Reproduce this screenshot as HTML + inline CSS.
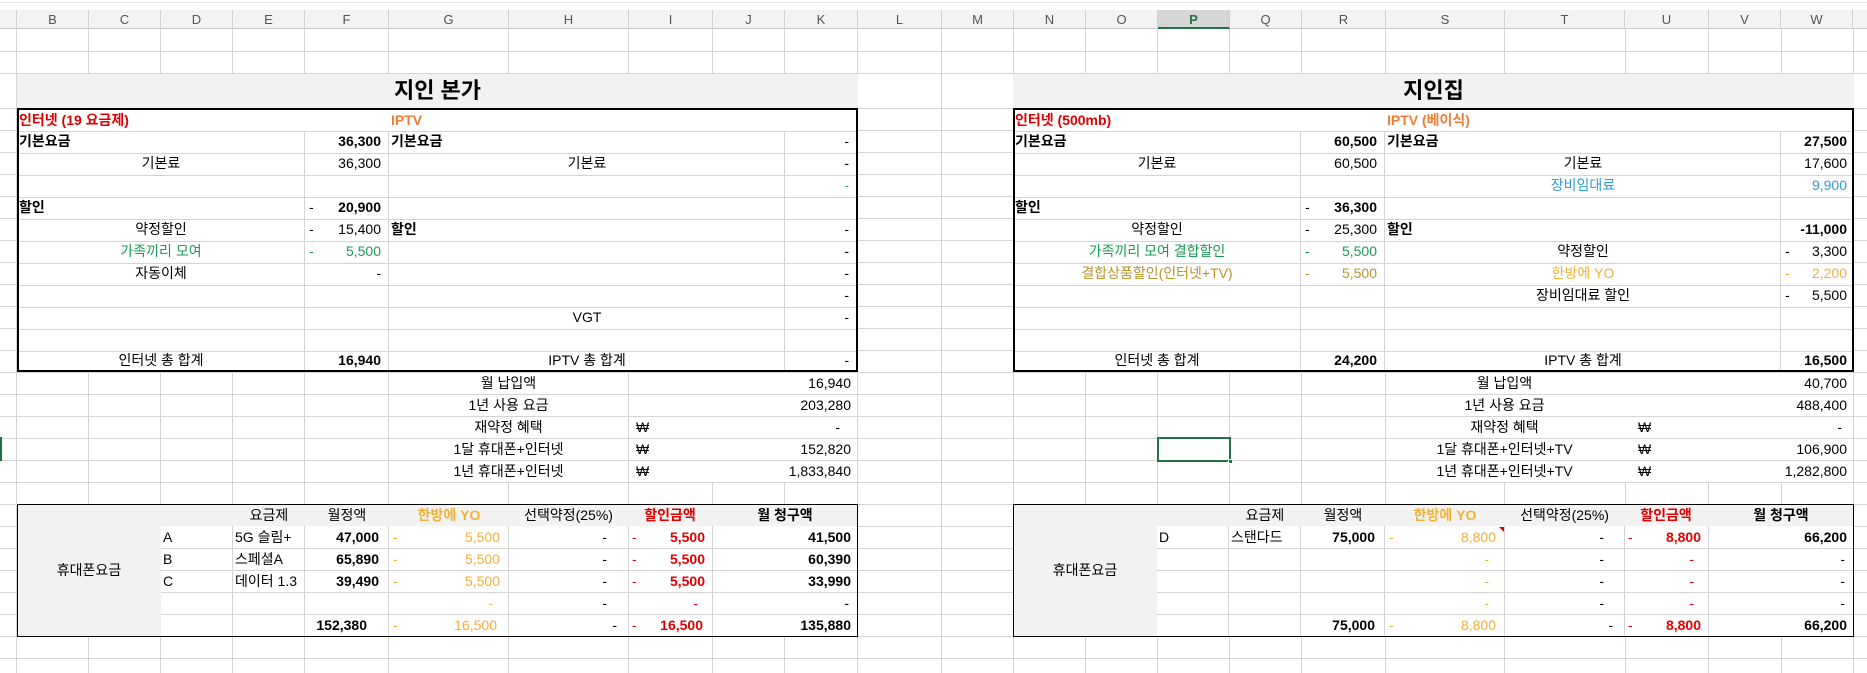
<!DOCTYPE html>
<html><head><meta charset="utf-8">
<style>
*{margin:0;padding:0;box-sizing:border-box}
body{width:1867px;height:673px;overflow:hidden;background:#fff;position:relative;font-family:"Liberation Sans","Noto Sans CJK KR",sans-serif;color:#000}
.a{position:absolute}
.t{position:absolute;height:22px;line-height:22px;font-size:14px;white-space:nowrap}
.b{font-weight:bold}
.c{text-align:center}
.r{text-align:right}
.blk{position:absolute;left:0;top:0;width:0;height:0}
.hl{position:absolute;height:1px;background:#d4d4d4}
.vl{position:absolute;width:1px;background:#d4d4d4}
.red{color:#e00000}.org{color:#ed7d31}.grn{color:#1a9a55}.gold{color:#b8922a}.blu{color:#2e9bd6}.amb{color:#f2b035}
.hdr{position:absolute;top:10px;height:19px;line-height:19px;font-size:13px;color:#555;text-align:center;border-right:1px solid #d0d0d0}
.grid{background:repeating-linear-gradient(to bottom,#fff 0 21px,#d4d4d4 21px 22px)}
.ttl{font-size:22px}
</style></head><body>
<div class="a" style="left:0;top:0;width:1867px;height:3px;background:#fff;border-bottom:1px solid #e6e6e6"></div>
<div class="a" style="left:0;top:10px;width:1867px;height:19px;background:#f3f3f3;border-bottom:1px solid #c8c8c8"></div>
<svg class="a" style="left:0;top:0" width="1867" height="673">
<g stroke="#d4d4d4" stroke-width="1">
<path d="M16.5 29V673M88.5 29V673M160.5 29V673M232.5 29V673M304.5 29V673M388.5 29V673M508.5 29V673M628.5 29V673M712.5 29V673M784.5 29V673M857.5 29V673M941.5 29V673M1013.5 29V673M1085.5 29V673M1157.5 29V673M1229.5 29V673M1301.5 29V673M1385.5 29V673M1504.5 29V673M1625.5 29V673M1708.5 29V673M1781.5 29V673M1853.5 29V673"/>
<path d="M0 51.5H1867M0 73.5H1867M0 108.5H1867M0 130.5H1867M0 152.5H1867M0 174.5H1867M0 196.5H1867M0 218.5H1867M0 240.5H1867M0 262.5H1867M0 284.5H1867M0 306.5H1867M0 328.5H1867M0 350.5H1867M0 372.5H1867M0 394.5H1867M0 416.5H1867M0 438.5H1867M0 460.5H1867M0 482.5H1867M0 504.5H1867M0 526.5H1867M0 548.5H1867M0 570.5H1867M0 592.5H1867M0 614.5H1867M0 636.5H1867M0 658.5H1867"/>
</g>
</svg>
<div class="hdr" style="left:0;width:17px"></div>
<div class="hdr" style="left:17px;width:72px">B</div>
<div class="hdr" style="left:89px;width:72px">C</div>
<div class="hdr" style="left:161px;width:72px">D</div>
<div class="hdr" style="left:233px;width:72px">E</div>
<div class="hdr" style="left:305px;width:84px">F</div>
<div class="hdr" style="left:389px;width:120px">G</div>
<div class="hdr" style="left:509px;width:120px">H</div>
<div class="hdr" style="left:629px;width:84px">I</div>
<div class="hdr" style="left:713px;width:72px">J</div>
<div class="hdr" style="left:785px;width:73px">K</div>
<div class="hdr" style="left:858px;width:84px">L</div>
<div class="hdr" style="left:942px;width:72px">M</div>
<div class="hdr" style="left:1014px;width:72px">N</div>
<div class="hdr" style="left:1086px;width:72px">O</div>
<div class="hdr" style="left:1158px;width:72px;background:#d6d6d6;color:#217346;font-weight:bold;border-bottom:2px solid #217346">P</div>
<div class="hdr" style="left:1230px;width:72px">Q</div>
<div class="hdr" style="left:1302px;width:84px">R</div>
<div class="hdr" style="left:1386px;width:119px">S</div>
<div class="hdr" style="left:1505px;width:120px">T</div>
<div class="hdr" style="left:1625px;width:84px">U</div>
<div class="hdr" style="left:1709px;width:72px">V</div>
<div class="hdr" style="left:1781px;width:72px">W</div>

<div class="blk">
<div class="a b c ttl" style="left:17px;top:74px;width:841px;height:34px;line-height:34px;background:#f2f2f2">지인 본가</div>
<div class="a grid" style="left:17px;top:108px;width:841px;height:264px;border:2px solid #000"></div>
<div class="vl" style="left:304px;top:131px;height:239px"></div>
<div class="vl" style="left:388px;top:131px;height:239px"></div>
<div class="vl" style="left:784px;top:131px;height:239px"></div>
<div class="t b red" style="left:19px;top:109px">인터넷 (19 요금제)</div>
<div class="t b org" style="left:391px;top:109px">IPTV</div>
<div class="t b" style="left:19px;top:130px">기본요금</div>
<div class="t b r" style="left:305px;width:76px;top:130px">36,300</div>
<div class="t b" style="left:391px;top:130px">기본요금</div>
<div class="t r" style="left:785px;width:64px;top:130px">-</div>
<div class="t c" style="left:17px;width:288px;top:152px">기본료</div>
<div class="t r" style="left:305px;width:76px;top:152px">36,300</div>
<div class="t c" style="left:389px;width:396px;top:152px">기본료</div>
<div class="t r" style="left:785px;width:64px;top:152px">-</div>
<div class="t r blu" style="left:785px;width:64px;top:174px">-</div>
<div class="t b" style="left:19px;top:196px">할인</div>
<div class="t" style="left:309px;top:196px">-</div>
<div class="t b r" style="left:305px;width:76px;top:196px">20,900</div>
<div class="t c" style="left:17px;width:288px;top:218px">약정할인</div>
<div class="t" style="left:309px;top:218px">-</div>
<div class="t r" style="left:305px;width:76px;top:218px">15,400</div>
<div class="t b" style="left:391px;top:218px">할인</div>
<div class="t r" style="left:785px;width:64px;top:218px">-</div>
<div class="t c grn" style="left:17px;width:288px;top:240px">가족끼리 모여</div>
<div class="t grn" style="left:309px;top:240px">-</div>
<div class="t r grn" style="left:305px;width:76px;top:240px">5,500</div>
<div class="t r" style="left:785px;width:64px;top:240px">-</div>
<div class="t c" style="left:17px;width:288px;top:262px">자동이체</div>
<div class="t r" style="left:305px;width:76px;top:262px">-</div>
<div class="t r" style="left:785px;width:64px;top:262px">-</div>
<div class="t r" style="left:785px;width:64px;top:284px">-</div>
<div class="t c" style="left:389px;width:396px;top:306px">VGT</div>
<div class="t r" style="left:785px;width:64px;top:306px">-</div>
<div class="t c" style="left:17px;width:288px;top:349px">인터넷 총 합계</div>
<div class="t b r" style="left:305px;width:76px;top:349px">16,940</div>
<div class="t c" style="left:389px;width:396px;top:349px">IPTV 총 합계</div>
<div class="t r" style="left:785px;width:64px;top:349px">-</div>
<div class="a grid" style="left:390px;top:373px;width:238px;height:110px"></div>
<div class="a grid" style="left:629px;top:373px;width:228px;height:110px"></div>
<div class="t c" style="left:389px;width:239px;top:372px">월 납입액</div>
<div class="t r" style="left:628px;width:223px;top:372px">16,940</div>
<div class="t c" style="left:389px;width:239px;top:394px">1년 사용 요금</div>
<div class="t r" style="left:628px;width:223px;top:394px">203,280</div>
<div class="t c" style="left:389px;width:239px;top:416px">재약정 혜택</div>
<div class="t" style="left:636px;top:416px">₩</div>
<div class="t r" style="left:628px;width:212px;top:416px">-</div>
<div class="t c" style="left:389px;width:239px;top:438px">1달 휴대폰+인터넷</div>
<div class="t" style="left:636px;top:438px">₩</div>
<div class="t r" style="left:628px;width:223px;top:438px">152,820</div>
<div class="t c" style="left:389px;width:239px;top:460px">1년 휴대폰+인터넷</div>
<div class="t" style="left:636px;top:460px">₩</div>
<div class="t r" style="left:628px;width:223px;top:460px">1,833,840</div>
<div class="a" style="left:17px;top:504px;width:841px;height:133px;border:1px solid #000;background:#fff"></div>
<div class="a" style="left:18px;top:505px;width:143px;height:131px;background:#f2f2f2"></div>
<div class="a" style="left:161px;top:505px;width:696px;height:21px;background:#f2f2f2"></div>
<div class="hl" style="left:161px;top:548px;width:696px"></div>
<div class="hl" style="left:161px;top:570px;width:696px"></div>
<div class="hl" style="left:161px;top:592px;width:696px"></div>
<div class="hl" style="left:161px;top:614px;width:696px"></div>
<div class="vl" style="left:232px;top:526px;height:110px"></div>
<div class="vl" style="left:304px;top:526px;height:110px"></div>
<div class="vl" style="left:388px;top:526px;height:110px"></div>
<div class="vl" style="left:508px;top:526px;height:110px"></div>
<div class="vl" style="left:628px;top:526px;height:110px"></div>
<div class="vl" style="left:712px;top:526px;height:110px"></div>
<div class="t c" style="left:17px;width:144px;top:559px">휴대폰요금</div>
<div class="t c" style="left:233px;width:72px;top:504px">요금제</div>
<div class="t c" style="left:305px;width:84px;top:504px">월정액</div>
<div class="t c b amb" style="left:389px;width:120px;top:504px">한방에 YO</div>
<div class="t c" style="left:509px;width:119px;top:504px">선택약정(25%)</div>
<div class="t c b red" style="left:628px;width:84px;top:504px">할인금액</div>
<div class="t c b" style="left:712px;width:146px;top:504px">월 청구액</div>
<div class="t" style="left:163px;top:526px">A</div>
<div class="t" style="left:235px;top:526px">5G 슬림+</div>
<div class="t b r" style="left:305px;width:74px;top:526px">47,000</div>
<div class="t amb" style="left:393px;top:526px">-</div>
<div class="t r amb" style="left:389px;width:111px;top:526px">5,500</div>
<div class="t r" style="left:509px;width:98px;top:526px">-</div>
<div class="t red" style="left:632px;top:526px">-</div>
<div class="t b r red" style="left:628px;width:77px;top:526px">5,500</div>
<div class="t b r" style="left:712px;width:139px;top:526px">41,500</div>
<div class="t" style="left:163px;top:548px">B</div>
<div class="t" style="left:235px;top:548px">스페셜A</div>
<div class="t b r" style="left:305px;width:74px;top:548px">65,890</div>
<div class="t amb" style="left:393px;top:548px">-</div>
<div class="t r amb" style="left:389px;width:111px;top:548px">5,500</div>
<div class="t r" style="left:509px;width:98px;top:548px">-</div>
<div class="t red" style="left:632px;top:548px">-</div>
<div class="t b r red" style="left:628px;width:77px;top:548px">5,500</div>
<div class="t b r" style="left:712px;width:139px;top:548px">60,390</div>
<div class="t" style="left:163px;top:570px">C</div>
<div class="t" style="left:235px;top:570px">데이터 1.3</div>
<div class="t b r" style="left:305px;width:74px;top:570px">39,490</div>
<div class="t amb" style="left:393px;top:570px">-</div>
<div class="t r amb" style="left:389px;width:111px;top:570px">5,500</div>
<div class="t r" style="left:509px;width:98px;top:570px">-</div>
<div class="t red" style="left:632px;top:570px">-</div>
<div class="t b r red" style="left:628px;width:77px;top:570px">5,500</div>
<div class="t b r" style="left:712px;width:139px;top:570px">33,990</div>
<div class="t r amb" style="left:389px;width:104px;top:592px">-</div>
<div class="t r" style="left:509px;width:98px;top:592px">-</div>
<div class="t r red" style="left:628px;width:70px;top:592px">-</div>
<div class="t r" style="left:712px;width:137px;top:592px">-</div>
<div class="t b r" style="left:305px;width:62px;top:614px">152,380</div>
<div class="t amb" style="left:393px;top:614px">-</div>
<div class="t r amb" style="left:389px;width:108px;top:614px">16,500</div>
<div class="t r" style="left:509px;width:108px;top:614px">-</div>
<div class="t red" style="left:632px;top:614px">-</div>
<div class="t b r red" style="left:628px;width:75px;top:614px">16,500</div>
<div class="t b r" style="left:712px;width:139px;top:614px">135,880</div>
</div>

<div class="blk" style="left:996px">
<div class="a b c ttl" style="left:17px;top:74px;width:841px;height:34px;line-height:34px;background:#f2f2f2">지인집</div>
<div class="a grid" style="left:17px;top:108px;width:841px;height:264px;border:2px solid #000"></div>
<div class="vl" style="left:304px;top:131px;height:239px"></div>
<div class="vl" style="left:388px;top:131px;height:239px"></div>
<div class="vl" style="left:784px;top:131px;height:239px"></div>
<div class="t b red" style="left:19px;top:109px">인터넷 (500mb)</div>
<div class="t b org" style="left:391px;top:109px">IPTV (베이식)</div>
<div class="t b" style="left:19px;top:130px">기본요금</div>
<div class="t b r" style="left:305px;width:76px;top:130px">60,500</div>
<div class="t b" style="left:391px;top:130px">기본요금</div>
<div class="t b r" style="left:785px;width:66px;top:130px">27,500</div>
<div class="t c" style="left:17px;width:288px;top:152px">기본료</div>
<div class="t r" style="left:305px;width:76px;top:152px">60,500</div>
<div class="t c" style="left:389px;width:396px;top:152px">기본료</div>
<div class="t r" style="left:785px;width:66px;top:152px">17,600</div>
<div class="t c blu" style="left:389px;width:396px;top:174px">장비임대료</div>
<div class="t r blu" style="left:785px;width:66px;top:174px">9,900</div>
<div class="t b" style="left:19px;top:196px">할인</div>
<div class="t" style="left:309px;top:196px">-</div>
<div class="t b r" style="left:305px;width:76px;top:196px">36,300</div>
<div class="t c" style="left:17px;width:288px;top:218px">약정할인</div>
<div class="t" style="left:309px;top:218px">-</div>
<div class="t r" style="left:305px;width:76px;top:218px">25,300</div>
<div class="t b" style="left:391px;top:218px">할인</div>
<div class="t b r" style="left:785px;width:66px;top:218px">-11,000</div>
<div class="t c grn" style="left:17px;width:288px;top:240px">가족끼리 모여 결합할인</div>
<div class="t grn" style="left:309px;top:240px">-</div>
<div class="t r grn" style="left:305px;width:76px;top:240px">5,500</div>
<div class="t c" style="left:389px;width:396px;top:240px">약정할인</div>
<div class="t" style="left:789px;top:240px">-</div>
<div class="t r" style="left:785px;width:66px;top:240px">3,300</div>
<div class="t c gold" style="left:17px;width:288px;top:262px">결합상품할인(인터넷+TV)</div>
<div class="t gold" style="left:309px;top:262px">-</div>
<div class="t r gold" style="left:305px;width:76px;top:262px">5,500</div>
<div class="t c amb" style="left:389px;width:396px;top:262px">한방에 YO</div>
<div class="t amb" style="left:789px;top:262px">-</div>
<div class="t r amb" style="left:785px;width:66px;top:262px">2,200</div>
<div class="t c" style="left:389px;width:396px;top:284px">장비임대료 할인</div>
<div class="t" style="left:789px;top:284px">-</div>
<div class="t r" style="left:785px;width:66px;top:284px">5,500</div>
<div class="t c" style="left:17px;width:288px;top:349px">인터넷 총 합계</div>
<div class="t b r" style="left:305px;width:76px;top:349px">24,200</div>
<div class="t c" style="left:389px;width:396px;top:349px">IPTV 총 합계</div>
<div class="t b r" style="left:785px;width:66px;top:349px">16,500</div>
<div class="a grid" style="left:390px;top:373px;width:238px;height:110px"></div>
<div class="a grid" style="left:629px;top:373px;width:228px;height:110px"></div>
<div class="t c" style="left:389px;width:239px;top:372px">월 납입액</div>
<div class="t r" style="left:628px;width:223px;top:372px">40,700</div>
<div class="t c" style="left:389px;width:239px;top:394px">1년 사용 요금</div>
<div class="t r" style="left:628px;width:223px;top:394px">488,400</div>
<div class="t c" style="left:389px;width:239px;top:416px">재약정 혜택</div>
<div class="t" style="left:642px;top:416px">₩</div>
<div class="t r" style="left:628px;width:218px;top:416px">-</div>
<div class="t c" style="left:389px;width:239px;top:438px">1달 휴대폰+인터넷+TV</div>
<div class="t" style="left:642px;top:438px">₩</div>
<div class="t r" style="left:628px;width:223px;top:438px">106,900</div>
<div class="t c" style="left:389px;width:239px;top:460px">1년 휴대폰+인터넷+TV</div>
<div class="t" style="left:642px;top:460px">₩</div>
<div class="t r" style="left:628px;width:223px;top:460px">1,282,800</div>
<div class="a" style="left:17px;top:504px;width:841px;height:133px;border:1px solid #000;background:#fff"></div>
<div class="a" style="left:18px;top:505px;width:143px;height:131px;background:#f2f2f2"></div>
<div class="a" style="left:161px;top:505px;width:696px;height:21px;background:#f2f2f2"></div>
<div class="hl" style="left:161px;top:548px;width:696px"></div>
<div class="hl" style="left:161px;top:570px;width:696px"></div>
<div class="hl" style="left:161px;top:592px;width:696px"></div>
<div class="hl" style="left:161px;top:614px;width:696px"></div>
<div class="vl" style="left:232px;top:526px;height:110px"></div>
<div class="vl" style="left:304px;top:526px;height:110px"></div>
<div class="vl" style="left:388px;top:526px;height:110px"></div>
<div class="vl" style="left:508px;top:526px;height:110px"></div>
<div class="vl" style="left:628px;top:526px;height:110px"></div>
<div class="vl" style="left:712px;top:526px;height:110px"></div>
<div class="t c" style="left:17px;width:144px;top:559px">휴대폰요금</div>
<div class="t c" style="left:233px;width:72px;top:504px">요금제</div>
<div class="t c" style="left:305px;width:84px;top:504px">월정액</div>
<div class="t c b amb" style="left:389px;width:120px;top:504px">한방에 YO</div>
<div class="t c" style="left:509px;width:119px;top:504px">선택약정(25%)</div>
<div class="t c b red" style="left:628px;width:84px;top:504px">할인금액</div>
<div class="t c b" style="left:712px;width:146px;top:504px">월 청구액</div>
<div class="t" style="left:163px;top:526px">D</div>
<div class="t" style="left:235px;top:526px">스탠다드</div>
<div class="t b r" style="left:305px;width:74px;top:526px">75,000</div>
<div class="t amb" style="left:393px;top:526px">-</div>
<div class="t r amb" style="left:389px;width:111px;top:526px">8,800</div>
<div class="a" style="left:503px;top:527px;width:0;height:0;border-left:5px solid transparent;border-top:5px solid #e00000"></div>
<div class="t r" style="left:509px;width:99px;top:526px">-</div>
<div class="t red" style="left:632px;top:526px">-</div>
<div class="t b r red" style="left:628px;width:77px;top:526px">8,800</div>
<div class="t b r" style="left:712px;width:139px;top:526px">66,200</div>
<div class="t r amb" style="left:389px;width:104px;top:548px">-</div>
<div class="t r" style="left:509px;width:99px;top:548px">-</div>
<div class="t r red" style="left:628px;width:70px;top:548px">-</div>
<div class="t r" style="left:712px;width:137px;top:548px">-</div>
<div class="t r amb" style="left:389px;width:104px;top:570px">-</div>
<div class="t r" style="left:509px;width:99px;top:570px">-</div>
<div class="t r red" style="left:628px;width:70px;top:570px">-</div>
<div class="t r" style="left:712px;width:137px;top:570px">-</div>
<div class="t r amb" style="left:389px;width:104px;top:592px">-</div>
<div class="t r" style="left:509px;width:99px;top:592px">-</div>
<div class="t r red" style="left:628px;width:70px;top:592px">-</div>
<div class="t r" style="left:712px;width:137px;top:592px">-</div>
<div class="t b r" style="left:305px;width:74px;top:614px">75,000</div>
<div class="t amb" style="left:393px;top:614px">-</div>
<div class="t r amb" style="left:389px;width:111px;top:614px">8,800</div>
<div class="t r" style="left:509px;width:108px;top:614px">-</div>
<div class="t red" style="left:632px;top:614px">-</div>
<div class="t b r red" style="left:628px;width:77px;top:614px">8,800</div>
<div class="t b r" style="left:712px;width:139px;top:614px">66,200</div>
</div>

<div class="a" style="left:1157px;top:437px;width:74px;height:25px;border:2px solid #217346"></div>
<div class="a" style="left:1228px;top:459px;width:5px;height:5px;background:#217346;border:1px solid #fff"></div>
<div class="a" style="left:0;top:437px;width:2px;height:24px;background:#217346"></div>
</body></html>
